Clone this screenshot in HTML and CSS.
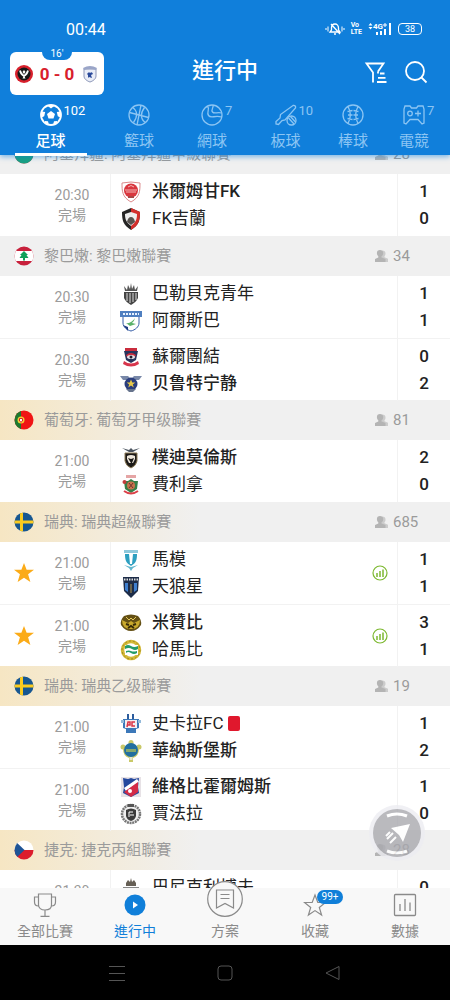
FILE: index.html
```
<!DOCTYPE html>
<html lang="zh-Hant">
<head>
  <meta charset="UTF-8" />
  <meta name="viewport" content="width=device-width, initial-scale=1" />
  <title>進行中</title>
  <link rel="stylesheet" href="styles.css">
</head>
<body>

<!-- flags and shared icons -->
<svg class="sprite" aria-hidden="true">
  <clipPath id="round"><circle cx="10" cy="10" r="9.5"/></clipPath>
  <symbol id="flag-az" viewBox="0 0 20 20"><g clip-path="url(#round)"><path fill="#e03a3a" d="M0 0h20v20H0z"/><path fill="#1aa083" d="M0 8h20v12H0z"/></g></symbol>
  <symbol id="flag-lb" viewBox="0 0 20 20"><g clip-path="url(#round)"><path fill="#c8213c" d="M0 0h20v20H0z"/><path fill="#fff" d="M0 5h20v10H0z"/><path fill="#12a05a" d="M10 5l4 4h-1.500l2 3h-3.500v2.500H9V12H5.500l2-3H6z"/></g></symbol>
  <symbol id="flag-pt" viewBox="0 0 20 20"><g clip-path="url(#round)"><path fill="#f01414" d="M0 0h20v20H0z"/><path fill="#1c7a30" d="M0 0h7v20H0z"/><circle cx="7" cy="10" r="3.500" fill="#f2cf35"/><path fill="#fff" stroke="#d22" d="M5.500 8.500h3v2.500L7 12.200 5.500 11z"/></g></symbol>
  <symbol id="flag-se" viewBox="0 0 20 20"><g clip-path="url(#round)"><path fill="#175791" d="M0 0h20v20H0z"/><path fill="#fbcb1f" d="M6 0h3v8.500h11v3H9V20H6v-8.500H0v-3h6z"/></g></symbol>
  <symbol id="flag-cz" viewBox="0 0 20 20"><g clip-path="url(#round)"><path fill="#fff" d="M0 0h20v10H0z"/><path fill="#dc1c2c" d="M0 10h20v10H0z"/><path fill="#1e5496" d="M0 0l10.500 10L0 20z"/></g></symbol>
  <symbol id="user" viewBox="0 0 13 12"><path fill="currentColor" opacity=".6" d="M7 .5c2.500 0 3.500 1.300 3.500 3 0 1.300-.4 2.200-1 2.700v1l3.500 1.500V12H7z"/><path fill="currentColor" d="M5 0c2 0 3.200 1.300 3.200 3 0 1.500-.6 2.600-1.400 3.200v1.200L10.500 9v3H0V9l3.300-1.600V6.200C2.500 5.600 1.900 4.500 1.900 3 1.900 1.300 3 0 5 0z"/></symbol>
  <symbol id="star" viewBox="0 0 22 22"><path fill="#fbab18" d="M11 0l2.900 7.500H22l-6.500 5 2.500 8.500-7-4.800L4 21l2.500-8.500-6.500-5h8.100z"/></symbol>
  <symbol id="stats" viewBox="0 0 16 16"><g fill="none" stroke="#7cb82f" stroke-width="1.200"><circle cx="8" cy="8" r="7"/><path d="M5 8v4M8 6v6M11 4.500V12" stroke-width="1.500"/></g></symbol>
</svg>

<div class="app">
  <header class="header">
    <div class="status">
      <span class="clock">00:44</span>
      <div class="status-icons">
        <svg width="20" height="14" viewBox="0 0 20 14" fill="none" stroke="#fff"><path d="M5 10h10l-1.500-2V6c0-2.500-1.500-4-3.500-4S6.500 3.500 6.500 6v2zM9 12h2M6 2l9 10" stroke-width="1.300"/><path d="M3 4.500v5M1 6v2M17 4.500v5M19 6v2"/></svg>
        <span class="volte">Vo<br>LTE</span>
        <svg class="signal" width="24" height="14" viewBox="0 0 24 14"><path fill="#fff" d="M8 10h2v3H8zM12 9h2v4h-2zM16 7h2v6h-2zM21 1h2v12h-2zM2.500 1l2 2.500h-4zM.5 5h4l-2 2.500z"/><text x="5" y="7">4G</text><path stroke="#fff" d="M15 3h4M17 1v4"/></svg>
        <span class="battery">38</span>
      </div>
    </div>

    <div class="titlebar">
      <a class="score-card" href="#">
        <span class="minute">16'</span>
        <svg width="18" height="18" viewBox="0 0 18 18"><circle cx="9" cy="9" r="9" fill="#d8202c"/><circle cx="9" cy="9" r="6.500" fill="#171717"/><path d="M5 5.500q1 4 4 5.500 3-1.500 4-5.500" fill="none" stroke="#fff" stroke-width="1.800"/><path d="M9 5l1.500 2L9 9 7.500 7zM9 10.500l1.500 3h-3z" fill="#fff"/></svg>
        <strong>0 - 0</strong>
        <svg width="18" height="18" viewBox="0 0 18 18"><path d="M3 4h12v7c0 3-3 5-6 6-3-1-6-3-6-6z" fill="#e9edf7" stroke="#8d97b8"/><path d="M2 3q7-4 14 0l-1 2q-6-2-12 0z" fill="#9aa5c8"/><path d="M6 9q2-3 3-1 2-2 3 1l-2 1 1 3-3-1-1 1v-3z" fill="#2a4a9a"/></svg>
      </a>
      <h1>進行中</h1>
      <div class="actions">
        <button type="button" aria-label="篩選"><svg width="24" height="24" viewBox="0 0 24 24" fill="none" stroke="#fff" stroke-width="1.800"><path d="M9 21.500V11.500L2.500 2.500h17L14 10.500M14 10.500v2M16 12.500h4.500M14 16.800h7.500M13 21h9.500"/></svg></button>
        <button type="button" aria-label="搜尋"><svg width="24" height="24" viewBox="0 0 24 24" fill="none" stroke="#fff" stroke-width="1.800"><circle cx="11" cy="10" r="9"/><path d="M17 16l5.500 5.500"/></svg></button>
      </div>
    </div>

    <nav class="sports">
      <button type="button" class="sport active">
        <span class="sport-icon">
          <svg width="22" height="22" viewBox="0 0 22 22"><circle cx="11" cy="11" r="10" fill="none" stroke="#fff" stroke-width="1.800"/><path fill="#fff" d="M11 7l4 3-1.500 4.500h-5L7 10zM7.500 1.800h7L11 4.500zM1.500 7.500l3.700.5-1 4.200-2.700 1.300zM20.500 7.500l-3.700.5 1 4.200 2.700 1.300zM5 17l3 .2 1 3.800-4-1.500zM17 17l-3 .2-1 3.800 4-1.500z"/></svg>
          <span class="count">102</span>
        </span>
        足球
      </button>
      <button type="button" class="sport">
        <span class="sport-icon"><svg width="22" height="22" viewBox="0 0 22 22" fill="none" stroke="currentColor" stroke-width="1.300"><circle cx="11" cy="11" r="10"/><path d="M13 1L9 21M1.500 8.500l19 5M4.500 3.500c5 3 5.500 9 1 15M17.500 18.500c-5-3-5.500-9-1-15"/></svg></span>
        籃球
      </button>
      <button type="button" class="sport">
        <span class="sport-icon"><svg width="22" height="22" viewBox="0 0 22 22" fill="none" stroke="currentColor" stroke-width="1.300"><circle cx="11" cy="11" r="10"/><path d="M6.500 2.200c3 3-1.500 6 1 9.300 2.500 3.500 6-.5 13 1.500M12 1c1 3-2.500 4.500-.5 7s5-.5 9 1"/></svg><span class="count">7</span></span>
        網球
      </button>
      <button type="button" class="sport">
        <span class="sport-icon"><svg width="22" height="22" viewBox="0 0 22 22" fill="none" stroke="currentColor" stroke-width="1.300"><path d="M18 1.500c2-.5 3 1 2.500 2.500L10 16l-3 .5L3.500 20.500 1 20v-2.500L5 14l.5-3.500z"/><circle cx="16.500" cy="16.500" r="4.500"/><path d="M13.500 14l5.500 6M15.500 12.500l5 5.500"/></svg><span class="count">10</span></span>
        板球
      </button>
      <button type="button" class="sport">
        <span class="sport-icon"><svg width="22" height="22" viewBox="0 0 22 22" fill="none" stroke="currentColor" stroke-width="1.300"><circle cx="11" cy="11" r="10"/><path d="M6 2.500c3 5.500 3 11.500 0 17M16 2.500c-3 5.500-3 11.500 0 17M5.500 7.500l5-1M6 11h4.500M5.500 14.500l5 1M16.500 7.500l-5-1M16 11h-4.500M16.500 14.500l-5 1"/></svg></span>
        棒球
      </button>
      <button type="button" class="sport">
        <span class="sport-icon"><svg width="22" height="22" viewBox="0 0 22 22" fill="none" stroke="currentColor" stroke-width="1.300"><path d="M2 2h5l1.500 2h5L15 2h5l1 3v14l-2 1-4-4.500H7L3 20l-2-1V5z"/><circle cx="7" cy="9.500" r="2.300"/><path d="M12 9.500h6M15 6.500v6"/></svg><span class="count">7</span></span>
        電競
      </button>
    </nav>
  </header>

  <main class="list">
    <div class="scroll">
      <section>
        <h2 class="league"><svg class="flag"><use href="#flag-az"/></svg><span>阿塞拜疆: 阿塞拜疆甲級聯賽</span><span class="viewers"><svg><use href="#user"/></svg>28</span></h2>
        <article class="match">
          <div class="time">20:30<br>完場</div>
          <div class="teams">
            <div class="team win"><svg viewBox="0 0 22 22"><path d="M2 2l9-1 9 1c0 8 0 14-9 19C2 16 2 10 2 2z" fill="#fff" stroke="#dc8a8c"/><circle cx="11" cy="9.500" r="7" fill="#d9363e"/><path d="M5 9h12M6 11h10M8 6q3-3 6 0" stroke="#f4b5b5" fill="none"/><path d="M8 15h6v2H8z" fill="#a44"/></svg>米爾姆甘FK</div>
            <div class="team"><svg viewBox="0 0 22 22"><path d="M11 0l9 4c0 8-1 13-9 18C3 17 2 12 2 4z" fill="#252525"/><path d="M11 0l9 4c0 8-1 13-9 18z" fill="#d42f2c"/><path d="M5 6l6-2 6 2c0 5-1 8-6 12-5-4-6-7-6-12z" fill="#eee"/><path d="M7 14q1-5 4-5t4 5l-4 3z" fill="#58534f"/></svg>FK吉蘭</div>
          </div>
          <div class="score"><b>1</b><b>0</b></div>
        </article>
      </section>

      <section>
        <h2 class="league"><svg class="flag"><use href="#flag-lb"/></svg><span>黎巴嫩: 黎巴嫩聯賽</span><span class="viewers"><svg><use href="#user"/></svg>34</span></h2>
        <article class="match">
          <div class="time">20:30<br>完場</div>
          <div class="teams">
            <div class="team"><svg viewBox="0 0 22 22"><path d="M4 3l3 4 1-5 2 4 1-6 1 6 2-4 1 5 3-4-1 5H5z" fill="#555"/><path d="M4 9h14v6c-1 3-4 5-7 7-3-2-6-4-7-7z" fill="#444"/><path d="M7 10v8M10 10v10M13 10v9M16 10v7" stroke="#ddd"/></svg>巴勒貝克青年</div>
            <div class="team"><svg viewBox="0 0 22 22"><path d="M3 6h16v7c0 4-4 7-8 8-4-1-8-4-8-8z" fill="#fff" stroke="#345ca6"/><path d="M0 1h22v6H0z" fill="#4f7fc0"/><path d="M3 4h16" stroke="#e8f2ff" stroke-width="2" stroke-dasharray="2 1"/><path d="M6 13q5 1 9-5-1 4-3 5l4 1-6 2z" fill="#5bb26a"/><path d="M3 15l5 2v4z" fill="#1d3b82"/></svg>阿爾斯巴</div>
          </div>
          <div class="score"><b>1</b><b>1</b></div>
        </article>
        <article class="match">
          <div class="time">20:30<br>完場</div>
          <div class="teams">
            <div class="team"><svg viewBox="0 0 22 22"><path d="M5 2h12v3H5z" fill="#c92c3d"/><path d="M4 5h14l-2 9-5 3-5-3z" fill="#27345c"/><path d="M6 9q5-4 10 0l-1 2q-4-3-8 0z" fill="#c92c3d"/><ellipse cx="11" cy="11" rx="4" ry="2" fill="#e8e2e6"/><circle cx="11" cy="11" r="1.500" fill="#1d1d2e"/><path d="M4 15q7 5 14 0l1 3q-8 5-16 0z" fill="#d7354c"/></svg>蘇爾團結</div>
            <div class="team win"><svg viewBox="0 0 22 22"><path d="M0 3h8l3 3 3-3h8l-3 4h-3v2H6V7H3z" fill="#7888a8"/><circle cx="11" cy="11" r="6.500" fill="#2b3e7d"/><path d="M11 6.500l1.300 3h3l-2.500 2 1 3-2.800-2-2.800 2 1-3-2.500-2h3z" fill="#e8c94a"/><path d="M6 16h10l-3 3H9z" fill="#67748d"/></svg>贝鲁特宁静</div>
          </div>
          <div class="score"><b>0</b><b>2</b></div>
        </article>
      </section>

      <section>
        <h2 class="league gold"><svg class="flag"><use href="#flag-pt"/></svg><span>葡萄牙: 葡萄牙甲级聯賽</span><span class="viewers"><svg><use href="#user"/></svg>81</span></h2>
        <article class="match">
          <div class="time">21:00<br>完場</div>
          <div class="teams">
            <div class="team win"><svg viewBox="0 0 22 22"><path d="M2 1l7 2 2-2 2 2 7-2-7 4H9z" fill="#4c5560"/><path d="M5 6h12v8q-1 5-6 7-5-2-6-7z" fill="#1c1a18" stroke="#8d7b56"/><path d="M7 9q4-2 8 0v3l-2 4h-4l-2-4z" fill="#efe8dc"/><path d="M8 11l3 1 3-1-2 5h-1z" fill="#1c1a18"/></svg>樸迪莫倫斯</div>
            <div class="team"><svg viewBox="0 0 22 22"><path d="M6 1h10v3H6z" fill="#e5a5a5"/><path d="M4 7h4l3-2 3 2h4l-1 8-6 4-6-4z" fill="#358048"/><circle cx="11" cy="11.500" r="4" fill="#c7734c"/><path d="M9 9l4 5M13 9l-4 5" stroke="#71342a"/><path d="M4 17q7 5 14 0" stroke="#db4048" stroke-width="2" fill="none"/><circle cx="4.500" cy="8" r="2" fill="#c23c3a"/></svg>費利拿</div>
          </div>
          <div class="score"><b>2</b><b>0</b></div>
        </article>
      </section>

      <section>
        <h2 class="league gold"><svg class="flag"><use href="#flag-se"/></svg><span>瑞典: 瑞典超級聯賽</span><span class="viewers"><svg><use href="#user"/></svg>685</span></h2>
        <article class="match">
          <button type="button" class="fav" aria-label="收藏"><svg><use href="#star"/></svg></button>
          <div class="time">21:00<br>完場</div>
          <div class="teams">
            <div class="team"><svg viewBox="0 0 22 22"><path d="M4 1h14v3H4z" fill="#8fc9dc"/><path d="M5 5h12c0 6-1 9-6 12C6 14 5 11 5 5z" fill="#2d9fc0"/><path d="M9 5h4l-1 10h-2z" fill="#fff"/><path d="M4 16l7 2 7-2-5 3-2 3-2-3z" fill="#62b6cd"/></svg>馬模</div>
            <div class="team"><svg viewBox="0 0 22 22"><path d="M3 1h16l-1 14-7 7-7-7z" fill="#1d2c48"/><path d="M5 7h3v9l-3-2zM14 7h3v7l-3 2z" fill="#3f7fce"/><path d="M4 3.500h14" stroke="#ddd" stroke-width="2" stroke-dasharray="1.500 1"/><path d="M11 8v9" stroke="#b79b55"/></svg>天狼星</div>
          </div>
          <div class="extra"><svg><use href="#stats"/></svg></div>
          <div class="score"><b>1</b><b>1</b></div>
        </article>
        <article class="match">
          <button type="button" class="fav" aria-label="收藏"><svg><use href="#star"/></svg></button>
          <div class="time">21:00<br>完場</div>
          <div class="teams">
            <div class="team win"><svg viewBox="0 0 22 22"><path d="M4 4q-4 4-3 9 4 6 10 6t10-6q1-5-3-9-7-3-14 0z" fill="#645014"/><path d="M2 8l6 3 3-2 3 2 6-3q0 9-9 9T2 8z" fill="#c9a92c"/><path d="M6 5l3 3 2-2 2 2 3-3" stroke="#e4c95b" fill="none"/><path d="M6 12l3 1M16 12l-3 1M8 16l3-2 3 2" stroke="#372b09" stroke-width="2" fill="none"/></svg>米贊比</div>
            <div class="team"><svg viewBox="0 0 22 22"><circle cx="11" cy="11" r="8.500" fill="none" stroke="#d4b936" stroke-width="3.500"/><circle cx="11" cy="11" r="9" fill="none" stroke="#9f8a20" stroke-dasharray="2 2"/><path d="M5 6h13v10H5z" fill="#fff"/><path d="M5 7q3-2 6 0t7 0v3q-3 2-6 0t-7 0zM6 12q3-1 5 0t6 0v2q-3 2-6 0t-5 0z" fill="#249b68"/></svg>哈馬比</div>
          </div>
          <div class="extra"><svg><use href="#stats"/></svg></div>
          <div class="score"><b>3</b><b>1</b></div>
        </article>
      </section>

      <section>
        <h2 class="league gold"><svg class="flag"><use href="#flag-se"/></svg><span>瑞典: 瑞典乙级聯賽</span><span class="viewers"><svg><use href="#user"/></svg>19</span></h2>
        <article class="match">
          <div class="time">21:00<br>完場</div>
          <div class="teams">
            <div class="team"><svg viewBox="0 0 22 22"><path d="M8 1v5M13 1v5" stroke="#2d5c9c" stroke-width="2"/><path d="M3 6h16v9l-3 1v4H6v-4l-3-1z" fill="#3c78b9"/><path d="M5 7h12v8H5z" fill="#f4eef1"/><path d="M7 14l1-5h2v3H8M15 9h-3v4h3" stroke="#da3546" stroke-width="1.500" fill="none"/><path d="M1 7h3v3H1zM18 7h3v3h-3z" fill="#94bada"/></svg>史卡拉FC<i class="red-card"></i></div>
            <div class="team win"><svg viewBox="0 0 22 22"><circle cx="11" cy="2.500" r="2.500" fill="#c9c968"/><circle cx="3" cy="7" r="2.500" fill="#c9c968"/><circle cx="19" cy="7" r="2.500" fill="#c9c968"/><path d="M3 9q0 7 6 9v4h4v-4q6-2 6-9z" fill="#c9c968"/><circle cx="11" cy="10" r="7" fill="#216f9f"/><path d="M6 9h10v3H6z" fill="#84a86e"/><path d="M9.500 17h3v3h-3z" fill="#e7e7cb"/></svg>華納斯堡斯</div>
          </div>
          <div class="score"><b>1</b><b>2</b></div>
        </article>
        <article class="match">
          <div class="time">21:00<br>完場</div>
          <div class="teams">
            <div class="team win"><svg viewBox="0 0 22 22"><path d="M1 1h20v20H1z" fill="#e7e2e6"/><path d="M3 2l5 1 3-1 3 1 5-1-1 9 1 6-8 4-8-4 1-6z" fill="#24489d"/><path d="M4 12L17 3l2 3L6 15z" fill="#fff"/><path d="M4 16L18 6v10l-7 5z" fill="#d42b47"/><circle cx="10" cy="15" r="2" fill="#fff"/></svg>維格比霍爾姆斯</div>
            <div class="team"><svg viewBox="0 0 22 22"><circle cx="11" cy="11" r="9" fill="#eee" stroke="#777" stroke-width="2.500" stroke-dasharray="2 .7"/><path d="M6 7q5-3 10 0v6q-1 4-5 5-4-1-5-5z" fill="#3b3b3b"/><path d="M13 9h-4v5M10 12h4" stroke="#fff" fill="none"/><path d="M8 1h6v3H8z" fill="#555"/></svg>賈法拉</div>
          </div>
          <div class="score"><b>1</b><b>0</b></div>
        </article>
      </section>

      <section>
        <h2 class="league gold"><svg class="flag"><use href="#flag-cz"/></svg><span>捷克: 捷克丙組聯賽</span><span class="viewers"><svg><use href="#user"/></svg>28</span></h2>
        <article class="match">
          <div class="time">21:30<br>完場</div>
          <div class="teams">
            <div class="team"><svg viewBox="0 0 22 22"><path d="M6 6l2-3 2 2 1-4 1 4 2-2 2 3v3H6z" fill="#665f55"/><path d="M3 10h16v4H3z" fill="#888"/><path d="M5 14h12l-6 8z" fill="#555"/></svg>巴尼克利博夫</div>
            <div class="team"><svg viewBox="0 0 22 22"><circle cx="11" cy="11" r="9" fill="#3c78b9"/></svg>布拉格</div>
          </div>
          <div class="score"><b>0</b><b>0</b></div>
        </article>
      </section>
    </div>

    <button type="button" class="fab" aria-label="推薦"><svg width="48" height="48" viewBox="0 0 48 48"><circle cx="24" cy="24" r="24" fill="#a9a9af"/><g stroke="#fff" stroke-width="3" fill="none"><path d="M14 7q10-4 20 0M14 42q10 4 20 0"/><path d="M20 24l-6 6M23 28l-6 6M17 23l-4 4" stroke-width="2"/></g><path fill="#fff" d="M18 19l19-4-7 18-4-7z"/></svg></button>
  </main>

  <nav class="tabbar">
    <a href="#">
      <svg width="24" height="24" viewBox="0 0 24 24" fill="none" stroke="currentColor" stroke-width="1.200"><path d="M5.500 1h13v11c0 3-2.500 5-6.500 5s-6.500-2-6.500-5zM5.500 4h-4v5c0 2.500 1.500 4 4 4M18.500 4h4v5c0 2.500-1.500 4-4 4M12 17v6M7.500 23.300h9"/></svg>
      全部比賽
    </a>
    <a href="#" class="active">
      <svg width="24" height="24" viewBox="0 0 24 24"><circle cx="12" cy="12" r="10.500" fill="#107fd9"/><path d="M10 8.500l5 3.500-5 3.500z" fill="#fff"/></svg>
      進行中
    </a>
    <a href="#">
      <svg width="36" height="36" viewBox="0 0 36 36" fill="none" stroke="currentColor" stroke-width="1.200"><circle cx="18" cy="18" r="17.300" fill="#f8f8f8"/><path d="M9.500 9h17v18L18 22.500 9.500 27zM13.500 13.500h9M13.500 17.500h9"/></svg>
      方案
    </a>
    <a href="#">
      <svg width="24" height="24" viewBox="0 0 24 24" fill="none" stroke="currentColor" stroke-width="1.200"><path d="M12 2l2.800 7.500h7.700l-6.200 5 2.300 7.500-6.600-4.400L5.400 22l2.300-7.500-6.200-5h7.700z"/></svg>
      <span class="badge">99+</span>
      收藏
    </a>
    <a href="#">
      <svg width="24" height="24" viewBox="0 0 24 24" fill="none" stroke="currentColor" stroke-width="1.300"><rect x="1.500" y="1.500" width="21" height="21" rx="1"/><path d="M7 11v7M12 6v12M17 9.500v8.500"/></svg>
      數據
    </a>
  </nav>

  <div class="system">
    <svg width="18" height="18" viewBox="0 0 18 18"><path d="M1 2.500h16M1 9.500h16M1 16.500h16"/></svg>
    <svg width="18" height="18" viewBox="0 0 18 18"><rect x="2" y="2" width="14" height="14" rx="3"/></svg>
    <svg width="18" height="18" viewBox="0 0 18 18"><path d="M15 2.500v13L2 9z" stroke-linejoin="round"/></svg>
  </div>
</div>

</body>
</html>
```
FILE: styles.css
```
* {
  margin: 0;
  padding: 0;
  box-sizing: border-box;
}
body {
  font-family: Roboto, "Noto Sans CJK TC", sans-serif;
  background-color: #fff;
  color: #222;
}
button {
  border: none;
  background: none;
  font: inherit;
  color: inherit;
  cursor: pointer;
}
a {
  color: inherit;
  text-decoration: none;
}
svg {
  display: block;
  flex: none;
}
.sprite {
  position: absolute;
  width: 0;
  height: 0;
}
.app {
  display: flex;
  flex-direction: column;
  height: 100vh;
}

/* header */
.header {
  position: relative;
  z-index: 2;
  background-color: #107fdb;
  color: #fff;
  box-shadow: 0 2px 5px rgba(16,127,219,0.5);
}
.status {
  display: flex;
  justify-content: space-between;
  align-items: center;
  height: 46px;
  padding: 12px 28px 0 66px;
}
.clock {
  font-size: 16px;
}
.status-icons {
  display: flex;
  align-items: center;
  gap: 6px;
}
.volte {
  font-size: 7px;
  line-height: 7px;
  font-weight: bold;
}
.signal text {
  font-size: 8px;
  font-weight: bold;
  fill: #fff;
}
.battery {
  width: 24px;
  border: 1px solid #fff;
  border-radius: 4px;
  font-size: 9px;
  line-height: 10px;
  text-align: center;
}
.titlebar {
  display: grid;
  grid-template-columns: 1fr auto 1fr;
  align-items: center;
  height: 54px;
  padding: 0 22px 0 10px;
}
.titlebar h1 {
  font-size: 22px;
  line-height: 30px;
  font-weight: 500;
  margin-left: 12px;
  padding-bottom: 4px;
}
.score-card {
  position: relative;
  display: flex;
  align-items: center;
  justify-content: space-between;
  width: 94px;
  height: 43px;
  padding: 1px 5px 0;
  border-radius: 6px;
  background-color: #fff;
  color: #d8202c;
}
.score-card strong {
  font-size: 17px;
}
.minute {
  position: absolute;
  top: -4px;
  left: 32px;
  width: 30px;
  border-radius: 0 0 8px 8px;
  background-color: #107fdb;
  color: #fff;
  font-size: 10px;
  line-height: 12px;
  text-align: center;
}
.actions {
  display: flex;
  justify-content: flex-end;
  gap: 16px;
}
.sports {
  display: grid;
  grid-template-columns: 101fr 76fr 70fr 77fr 58fr 64fr;
  padding-right: 4px;
}
.sport {
  position: relative;
  display: flex;
  flex-direction: column;
  align-items: center;
  gap: 5px;
  padding: 4px 0;
  font-size: 15px;
  line-height: 20px;
  color: #8cc5f3;
}
.sport.active {
  color: #fff;
  font-weight: 500;
}
.sport.active::after {
  content: "";
  position: absolute;
  bottom: -1px;
  width: 72px;
  height: 3px;
  background-color: #fff;
}
.sport-icon {
  position: relative;
}
.count {
  position: absolute;
  left: 24px;
  top: -2px;
  font-size: 13px;
  font-weight: normal;
  line-height: 18px;
}

/* match list */
.list {
  position: relative;
  flex: 1;
  min-height: 0;
  overflow: hidden;
}
.scroll {
  margin-top: -21px;
}
.league {
  display: flex;
  align-items: center;
  gap: 10px;
  height: 40px;
  padding-left: 14px;
  background-color: #f0f0f0;
  color: #9b9b9b;
  font-size: 15px;
  line-height: 20px;
  font-weight: normal;
}
.league.gold {
  background-image: linear-gradient(to right, #f6e6c3, #f0f0f0 200px);
}
.flag {
  width: 20px;
  height: 20px;
}
.viewers {
  display: flex;
  align-items: center;
  gap: 5px;
  width: 75px;
  margin-left: auto;
}
.viewers svg {
  width: 13px;
  height: 12px;
  color: #b4b4b4;
}
.match {
  display: grid;
  grid-template-columns: 20px 76px 1fr 34px 53px;
  grid-template-areas: "fav time teams extra score";
  align-items: center;
  height: 62px;
  padding-left: 14px;
}
.match + .match {
  border-top: 1px solid #f2f2f2;
}
.fav {
  grid-area: fav;
}
.fav svg {
  width: 20px;
  height: 22px;
}
.time {
  grid-area: time;
  font-size: 14px;
  line-height: 20px;
  text-align: center;
  color: #9b9b9b;
}
.teams {
  grid-area: teams;
  padding: 4px 0 4px 9px;
  border-left: 1px solid #f2f2f2;
}
.team {
  display: flex;
  align-items: center;
  gap: 10px;
  font-size: 17px;
  line-height: 27px;
  white-space: nowrap;
}
.team svg {
  width: 22px;
  height: 22px;
}
.win {
  font-weight: 500;
}
.red-card {
  width: 12px;
  height: 15px;
  margin-left: -5px;
  border-radius: 2px;
  background-color: #e0182d;
}
.extra {
  grid-area: extra;
}
.extra svg {
  width: 16px;
  height: 16px;
  margin: auto;
}
.score {
  grid-area: score;
  display: grid;
  padding: 4px 0;
  border-left: 1px solid #f2f2f2;
  font-size: 17px;
  line-height: 27px;
  text-align: center;
}
.score b {
  font-weight: 500;
}
.fab {
  position: absolute;
  right: 25px;
  bottom: 27px;
  padding: 4px;
  border-radius: 50%;
  background-color: #ededf2;
  opacity: 0.8;
}

/* bottom tabs */
.tabbar {
  position: relative;
  z-index: 2;
  display: grid;
  grid-template-columns: repeat(5, 1fr);
  grid-template-rows: 100%;
  height: 57px;
  background-color: #f8f8f8;
}
.tabbar a {
  position: relative;
  display: flex;
  flex-direction: column;
  align-items: center;
  justify-content: flex-end;
  gap: 4px;
  padding-bottom: 4px;
  font-size: 14px;
  line-height: 20px;
  color: #8a8a8a;
}
.tabbar a.active {
  color: #107fd9;
}
.badge {
  position: absolute;
  top: 2px;
  left: 50%;
  margin-left: 2px;
  width: 26px;
  border-radius: 7px;
  background-color: #107fd9;
  color: #fff;
  font-size: 10px;
  line-height: 14px;
  text-align: center;
}
.system {
  display: flex;
  align-items: center;
  justify-content: space-around;
  height: 55px;
  padding: 0 14%;
  background-color: #000;
}
.system svg {
  fill: none;
  stroke: #555;
}
```
